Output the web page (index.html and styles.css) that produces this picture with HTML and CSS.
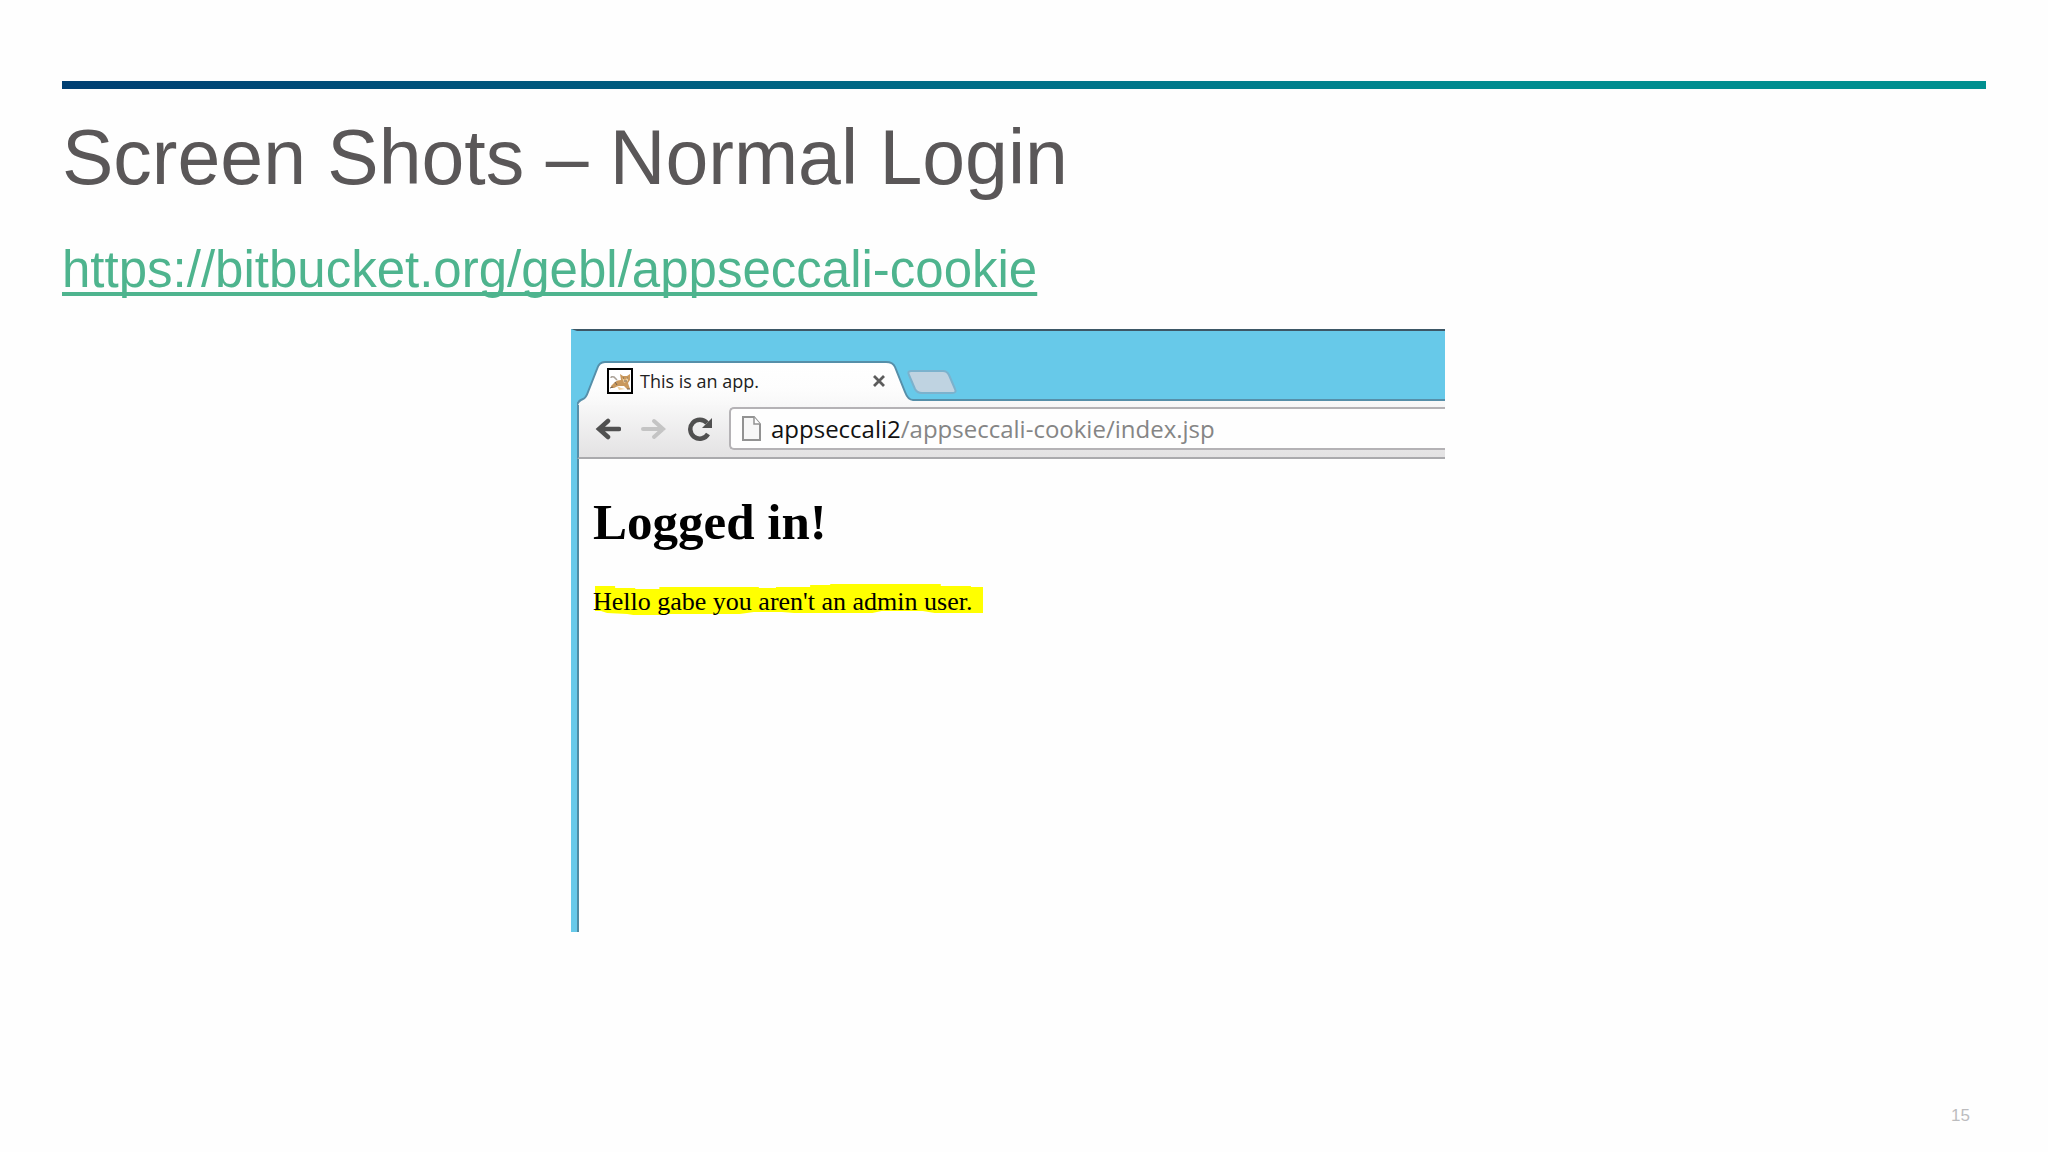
FILE: index.html
```html
<!DOCTYPE html>
<html lang="en">
<head>
<meta charset="utf-8">
<title>Screen Shots – Normal Login</title>
<link rel="stylesheet" href="styles.css">
</head>
<body>
<main class="slide">
  <div class="rule"></div>
  <h1 class="title">Screen Shots – Normal Login</h1>
  <a class="repo" href="https://bitbucket.org/gebl/appseccali-cookie">https://bitbucket.org/gebl/appseccali-cookie</a>
  <div class="stage">
    <section class="browser" aria-label="Browser window">
      <div class="strip">
        <div class="tab">
          <svg class="tab-shape" width="336" height="44" viewBox="0 0 336 44" aria-hidden="true">
            <defs><linearGradient id="tabFill" x1="0" y1="0" x2="0" y2="1"><stop offset="0" stop-color="#fff"/><stop offset=".6" stop-color="#fdfdfd"/><stop offset="1" stop-color="#f8f8f8"/></linearGradient></defs>
            <path d="M1 44Q1 40 6 38Q9 37 11 31L20 8Q22 1 28 1H309Q316 1 318 6L328 31Q331 39 336 39V44Z" fill="url(#tabFill)"/>
            <path d="M0 44Q1 40 6 38Q9 37 11 31L20 8Q22 1 28 1H309Q316 1 318 6L328 31Q331 39 336 39" fill="none" stroke="#568fa9" stroke-width="2"/>
          </svg>
          <svg class="favicon" width="26" height="26" viewBox="0 0 26 26" aria-hidden="true">
            <rect x="1" y="1" width="24" height="24" fill="#fff" stroke="#000" stroke-width="2"/>
            <path d="M4 10Q4 8 7 9L10 12" fill="none" stroke="#aaa197" stroke-width="1.5"/>
            <path d="M4 18Q6 16 8 14Q10 12 14 12L13 6L16 8H20L23 6V12L21 15L22 18L23 21H20L17 18L11 18L7 20H4Z" fill="#c9985c"/>
            <path d="M15 10L18 12L21 9L21 13L17 15ZM10 18L14 20L18 21L12 22Z" fill="#efcf9e"/>
            <path d="M3 20L6 19M8 14L10 17M20 21H23M16 10H17M20 10H21M17 13H20" stroke="#75604c" stroke-width="1"/>
          </svg>
          <span class="tab-title">This is an app.</span>
          <button class="plain" type="button" aria-label="Close tab">
            <svg width="12" height="12" viewBox="0 0 12 12"><path d="M1 1L11 11M11 1L1 11" stroke="#5c5c5c" stroke-width="2.8"/></svg>
          </button>
        </div>
        <button class="plain new-tab" type="button" aria-label="New tab">
          <svg width="52" height="26" viewBox="0 0 52 26"><path d="M5 2H37Q41 2 43 6L49 20Q51 24 46 24H16Q11 24 9 20L3 6Q1 2 5 2Z" fill="#bfd3e1" stroke="#7bb2cd" stroke-width="2"/></svg>
        </button>
      </div>
      <div class="toolbar">
        <button class="plain" type="button" aria-label="Back">
          <svg width="26" height="24" viewBox="0 0 26 24"><path d="M24 12H4M13 4L4 12L13 20" fill="none" stroke="#505050" stroke-width="4.500" stroke-linecap="round" stroke-linejoin="miter"/></svg>
        </button>
        <button class="plain" type="button" aria-label="Forward">
          <svg width="26" height="24" viewBox="0 0 26 24"><path d="M2 12H22M13 4L22 12L13 20" fill="none" stroke="#c4c4c4" stroke-width="4" stroke-linecap="round"/></svg>
        </button>
        <button class="plain" type="button" aria-label="Reload">
          <svg width="26" height="24" viewBox="0 0 26 24"><path d="M20 6A9.500 9.500 0 1 0 21 17" fill="none" stroke="#505050" stroke-width="4.500"/><path d="M25 1V11H15Z" fill="#505050"/></svg>
        </button>
        <div class="address">
          <svg width="19" height="25" viewBox="0 0 19 25" aria-hidden="true"><path d="M1 1H12L18 8V24H1Z" fill="#f7f7f7" stroke="#929292" stroke-width="2"/><path d="M12 1V8H18" fill="#fff" stroke="#929292" stroke-width="1.500"/></svg>
          <div class="url" role="textbox" aria-label="Address"><span class="host">appseccali2</span>/appseccali-cookie/index.jsp</div>
        </div>
      </div>
      <div class="page">
        <h2 class="heading">Logged in!</h2>
        <p class="message"><svg class="marker" viewBox="0 0 388 32" preserveAspectRatio="none" aria-hidden="true"><path d="M2 2H22V4H42V5H66V3H165V4H182V3H216V1H236V0H346V2H376V3H388V29H340L328 27H287L278 29H200L188 28H160L146 30H72L70 31H40L34 30L14 29L8 27H2Z" fill="#ff0"/></svg>Hello gabe you aren't an admin user.</p>
      </div>
    </section>
  </div>
  <footer class="number">15</footer>
</main>
</body>
</html>
```
FILE: styles.css
```css
* { box-sizing: border-box; }

body {
  margin: 0;
  background: #fefefe;
  font-family: "Liberation Sans", Arial, sans-serif;
}

.slide {
  min-height: 100vh;
  padding: 81px 62px 26px;
  display: flex;
  flex-direction: column;
  align-items: flex-start;
}

.rule {
  align-self: stretch;
  height: 8px;
  background: linear-gradient(90deg, #003f72, #007088 50%, #008c90 75%, #009090);
}

.title {
  margin: 24px 0 0;
  font-size: 77px;
  line-height: 88px;
  font-weight: 400;
  color: #5a5758;
}

.repo {
  margin-top: 40px;
  font-size: 51px;
  line-height: 58px;
  color: #4eb48e;
  text-decoration-thickness: 4px;
  text-underline-offset: 5px;
  text-decoration-skip-ink: none;
}

.stage {
  align-self: stretch;
  margin-top: 30px;
  display: grid;
  grid-template-columns: 509fr 874fr 541fr;
}

.browser {
  grid-column: 2;
  min-width: 0;
  border-top: 2px solid #3d5766;
  border-left: 6px solid #67c9e9;
  background: #67c9e9;
  font-family: "Open Sans", "Noto Sans", sans-serif;
}

.plain {
  display: flex;
  padding: 0;
  border: 0;
  background: none;
}

.strip {
  height: 68px;
  padding-top: 30px;
  display: flex;
  align-items: flex-start;
}

.tab {
  position: relative;
  width: 336px;
  height: 40px;
  padding: 0 28px 0 30px;
  display: flex;
  align-items: center;
  gap: 7px;
}

.tab > * { position: relative; }

.tab > .tab-shape {
  position: absolute;
  left: 0;
  top: 0;
}

.tab-title {
  flex: 1;
  font-size: 18px;
  line-height: 24px;
  color: #222;
}

.new-tab { margin: 8px 0 0 -7px; }

.toolbar {
  height: 60px;
  padding: 6px 0 7px 16px;
  display: flex;
  align-items: center;
  gap: 20px;
  border: solid #568fa9;
  border-width: 2px 0 0 2px;
  border-bottom: 2px solid #aaaaad;
  border-top-left-radius: 6px;
  background: linear-gradient(#f9f9f9, #e3e2e3);
}

.address {
  flex: 1;
  min-width: 0;
  height: 43px;
  margin-left: -4px;
  padding-left: 11px;
  display: flex;
  align-items: center;
  gap: 10px;
  border: 2px solid #b4b2b5;
  border-right: 0;
  border-radius: 5px 0 0 5px;
  background: #fefefe;
}

.url {
  font-size: 24px;
  line-height: 32px;
  color: #858585;
  white-space: nowrap;
}

.host { color: #111; }

.page {
  padding: 34px 14px 315px;
  border-left: 2px solid #4f8ba3;
  background: #fefefe;
  color: #000;
  font-family: "Liberation Serif", "Times New Roman", serif;
}

.heading {
  margin: 0;
  font-size: 51px;
  line-height: 58px;
  font-weight: 700;
}

.message {
  position: relative;
  isolation: isolate;
  margin: 36px 0 0;
  font-size: 26px;
  line-height: 30px;
}

.marker {
  position: absolute;
  z-index: -1;
  left: 0;
  top: -3px;
  width: 390px;
  height: 32px;
}

.number {
  margin-top: auto;
  align-self: flex-end;
  padding-right: 16px;
  font-size: 17px;
  line-height: 20px;
  color: #bcbcbe;
}
```
